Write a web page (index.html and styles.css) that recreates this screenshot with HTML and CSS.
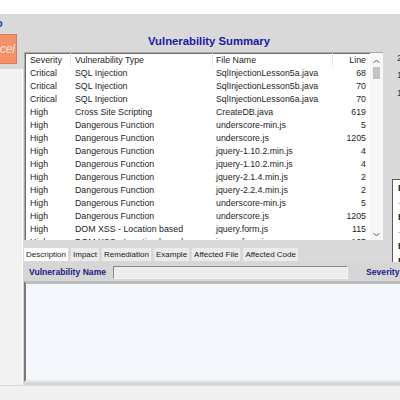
FILE: index.html
```html
<!DOCTYPE html>
<html>
<head>
<meta charset="utf-8">
<link rel="stylesheet" href="styles.css">
</head>
<body>
<div class="top"></div>
<div class="main">
  <div class="side">
    <div class="mark"><span class="dot">o</span></div>
    <div class="btn"><span>Cancel</span></div>
    <div class="sidepanel"></div>
  </div>
  <div class="content">
    <div class="title">Vulnerability Summary</div>
    <div class="upper">
      <div class="leftcol">
        <div class="table">
          <div class="grid">
            <div class="row head">
              <div class="c1">Severity</div><div class="c2">Vulnerability Type</div><div class="c3">File Name</div><div class="c4">Line</div>
            </div>
            <div class="row"><div class="c1">Critical</div><div class="c2">SQL Injection</div><div class="c3">SqlInjectionLesson5a.java</div><div class="c4">68</div></div>
            <div class="row"><div class="c1">Critical</div><div class="c2">SQL Injection</div><div class="c3">SqlInjectionLesson5b.java</div><div class="c4">70</div></div>
            <div class="row"><div class="c1">Critical</div><div class="c2">SQL Injection</div><div class="c3">SqlInjectionLesson6a.java</div><div class="c4">70</div></div>
            <div class="row"><div class="c1">High</div><div class="c2">Cross Site Scripting</div><div class="c3">CreateDB.java</div><div class="c4">619</div></div>
            <div class="row"><div class="c1">High</div><div class="c2">Dangerous Function</div><div class="c3">underscore-min.js</div><div class="c4">5</div></div>
            <div class="row"><div class="c1">High</div><div class="c2">Dangerous Function</div><div class="c3">underscore.js</div><div class="c4">1205</div></div>
            <div class="row"><div class="c1">High</div><div class="c2">Dangerous Function</div><div class="c3">jquery-1.10.2.min.js</div><div class="c4">4</div></div>
            <div class="row"><div class="c1">High</div><div class="c2">Dangerous Function</div><div class="c3">jquery-1.10.2.min.js</div><div class="c4">4</div></div>
            <div class="row"><div class="c1">High</div><div class="c2">Dangerous Function</div><div class="c3">jquery-2.1.4.min.js</div><div class="c4">2</div></div>
            <div class="row"><div class="c1">High</div><div class="c2">Dangerous Function</div><div class="c3">jquery-2.2.4.min.js</div><div class="c4">2</div></div>
            <div class="row"><div class="c1">High</div><div class="c2">Dangerous Function</div><div class="c3">underscore-min.js</div><div class="c4">5</div></div>
            <div class="row"><div class="c1">High</div><div class="c2">Dangerous Function</div><div class="c3">underscore.js</div><div class="c4">1205</div></div>
            <div class="row"><div class="c1">High</div><div class="c2">DOM XSS - Location based</div><div class="c3">jquery.form.js</div><div class="c4">115</div></div>
            <div class="row"><div class="c1">High</div><div class="c2">DOM XSS - Location based</div><div class="c3">jquery.form.js</div><div class="c4">165</div></div>
          </div>
          <div class="scroll">
            <svg class="arr" width="7" height="5" viewBox="0 0 7 5"><polyline points="0.5,4 3.5,1 6.5,4" fill="none" stroke="#606060" stroke-width="1"/></svg>
            <div class="thumb"></div>
            <div class="spacer"></div>
            <svg class="arr" width="7" height="5" viewBox="0 0 7 5"><polyline points="0.5,1 3.5,4 6.5,1" fill="none" stroke="#606060" stroke-width="1"/></svg>
          </div>
        </div>
        <div class="tabs">
          <div class="tab sel">Description</div>
          <div class="tab">Impact</div>
          <div class="tab">Remediation</div>
          <div class="tab">Example</div>
          <div class="tab">Affected File</div>
          <div class="tab">Affected Code</div>
        </div>
      </div>
      <div class="rightcol">
        <div class="num">2</div>
        <div class="num n2">1</div>
        <div class="num n3">1</div>
        <div class="box">
          <div>B</div><div class="dash">-</div><div>B</div><div class="dash">-</div><div>B</div><div>B</div>
        </div>
      </div>
    </div>
    <div class="details">
      <div class="namerow">
        <span class="lbl">Vulnerability Name</span>
        <div class="input"></div>
        <span class="lbl sev">Severity</span>
      </div>
      <div class="textarea"></div>
    </div>
  </div>
</div>
<div class="bottom"></div>
</body>
</html>
```
FILE: styles.css
```css
html, body {
  margin: 0;
  padding: 0;
}
body {
  width: 400px;
  height: 400px;
  overflow: hidden;
  background: #f0f0f0;
  font-family: "Liberation Sans", Arial, sans-serif;
  font-size: 8.8px;
  color: #1e1e1e;
}
.top {
  height: 14px;
  background: #ffffff;
}
.main {
  display: flex;
  height: 371px;
  background: #d9d9d9;
}
.side {
  width: 23px;
  flex: none;
  display: flex;
  flex-direction: column;
}
.mark {
  height: 20px;
  overflow: hidden;
}
.dot {
  display: block;
  margin-left: -4px;
  margin-top: 3px;
  font-size: 11px;
  font-weight: bold;
  line-height: 12px;
  color: #1f3fb0;
}
.btn {
  width: 16px;
  height: 28px;
  background: #f39069;
  border: 1px solid #dc7a52;
  border-left: none;
  display: flex;
  justify-content: flex-end;
  align-items: center;
  overflow: hidden;
}
.btn span {
  font-style: italic;
  font-size: 12px;
  color: #fde3d4;
  white-space: nowrap;
  padding-right: 1px;
}
.sidepanel {
  margin-top: 5px;
  flex: 1;
  width: 22px;
  background: #f2f2f2;
  border-right: 1px solid #fbfbfb;
}
.content {
  flex: 1;
  display: flex;
  flex-direction: column;
  min-width: 0;
}
.title {
  height: 38px;
  box-sizing: border-box;
  padding-top: 20px;
  padding-left: 125px;
  font-size: 11.3px;
  font-weight: bold;
  line-height: 14px;
  color: #1a1aa6;
}
.upper {
  display: flex;
  height: 210px;
}
.leftcol {
  width: 360px;
  flex: none;
  display: flex;
  flex-direction: column;
}
.table {
  margin-left: 1px;
  height: 188px;
  box-sizing: border-box;
  border-left: 1px solid #a8a8a8;
  border-top: 1px solid #a8a8a8;
  box-shadow: inset 1px 1px 0 #6e6e6e;
  background: #ffffff;
  display: flex;
  overflow: hidden;
}
.grid {
  width: 344px;
  padding-left: 1px;
  flex: none;
}
.row {
  display: grid;
  grid-template-columns: 45px 142px 120px 36px;
  height: 13px;
  line-height: 13px;
  white-space: nowrap;
}
.row.head {
  height: 14px;
  line-height: 15px;
}
.row > div {
  padding-left: 4px;
  overflow: hidden;
}
.row .c3 {
  padding-left: 3px;
}
.row .c4 {
  text-align: right;
  padding-left: 0;
  padding-right: 3px;
}
.head > div {
  border-right: 1px solid #e6e6e6;
}
.head .c4 {
  border-right: none;
}
.scroll {
  width: 13px;
  flex: none;
  background: #f7f7f7;
  display: flex;
  flex-direction: column;
  align-items: center;
}
.arr {
  display: block;
  margin-top: 6px;
  flex: none;
}
.thumb {
  width: 7px;
  height: 12px;
  margin-top: 3px;
  background: #c3c3c3;
}
.spacer {
  flex: 1;
}
.scroll .arr:last-child {
  margin-top: 0;
  margin-bottom: 3px;
}
.tabs {
  display: flex;
  gap: 3px;
  margin-top: 8px;
  margin-left: 1px;
  height: 13px;
}
.tab {
  padding: 0 2px;
  font-size: 8px;
  line-height: 13px;
  background: #ebebeb;
  white-space: nowrap;
  color: #222;
}
.tab.sel {
  background: #ffffff;
}
.rightcol {
  width: 17px;
  flex: none;
  overflow: hidden;
}
.num {
  padding-left: 14px;
  line-height: 12px;
  font-size: 9px;
  color: #333;
}
.n2 {
  margin-top: 5px;
}
.n3 {
  margin-top: 6px;
}
.box {
  margin-top: 80px;
  margin-left: 9px;
  height: 90px;
  background: #ffffff;
  border-left: 1px solid #5a5a5a;
  border-top: 1px solid #5a5a5a;
  padding-left: 5px;
  font-weight: bold;
  font-size: 9px;
  line-height: 14.5px;
  padding-top: 1px;
}
.box .dash {
  color: #999;
  font-weight: normal;
}
.details {
  flex: 1;
  display: flex;
  flex-direction: column;
  background: #d6d6d6;
}
.namerow {
  height: 18px;
  display: flex;
  align-items: center;
  padding-left: 6px;
  white-space: nowrap;
  padding-top: 1px;
}
.lbl {
  font-weight: bold;
  font-size: 8.6px;
  color: #202084;
}
.input {
  margin-left: 7px;
  width: 233px;
  height: 11px;
  flex: none;
  background: #ededed;
  border-top: 1px solid #8a8a8a;
  border-left: 1px solid #8a8a8a;
  border-bottom: 1px solid #f6f6f6;
  border-right: 1px solid #f6f6f6;
}
.sev {
  margin-left: 18px;
}
.textarea {
  margin-left: 1px;
  margin-bottom: 3px;
  flex: 1;
  background: #f4f7fc;
  border-top: 3px solid #bcbcbc;
  border-left: 2px solid #7a7a7a;
  border-bottom: 2px solid #e9e9e9;
}
.bottom {
  height: 15px;
  background: #f0f0f0;
  border-top: 1px solid #dadada;
  box-sizing: border-box;
}
```
